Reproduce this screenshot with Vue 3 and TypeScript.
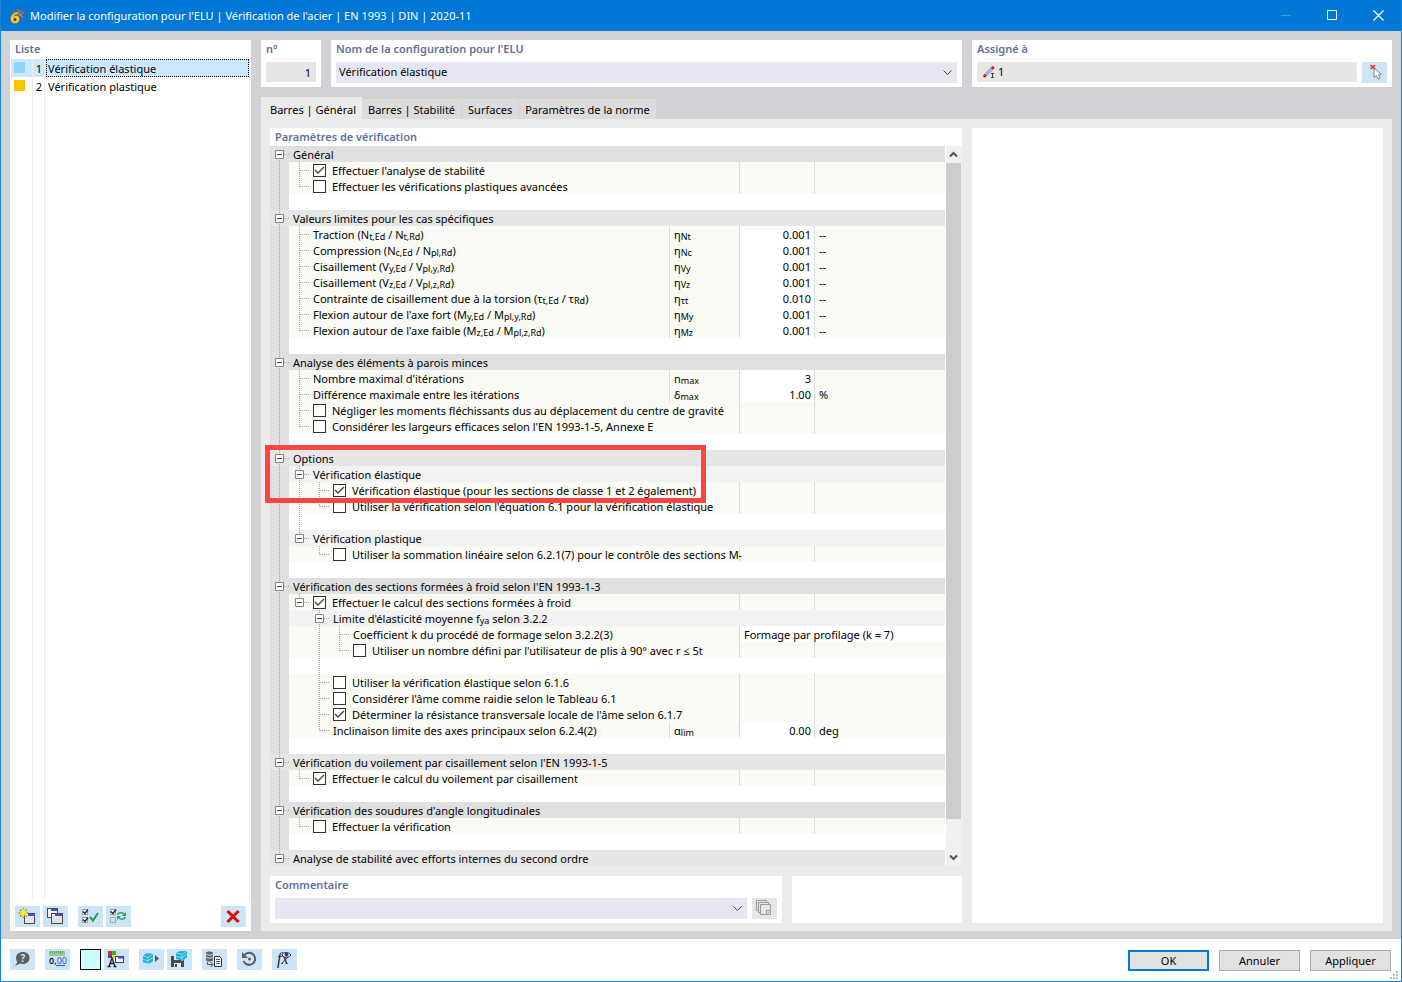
<script setup lang="ts">
import { ref } from 'vue'

type Guide = 'v' | 't' | 'l' | 'first' | 'mid' | 'last' | 'none'
interface Row {
  kind: 'dark' | 'light' | 'sub' | 'item' | 'blank'
  guides: Guide[]
  text?: string
  checked?: boolean
  symbol?: string
  value?: string
  unit?: string
  choice?: string
}
interface Part { text: string; sub: boolean }

// Subscripts are written between braces: "N{t,Ed}"
function parts(source: string): Part[] {
  return source
    .split(/(\{[^}]*\})/)
    .filter((s) => s.length > 0)
    .map((s) => (s[0] === '{' ? { text: s.slice(1, -1), sub: true } : { text: s, sub: false }))
}

const codes: Record<string, Guide> = { '|': 'v', '+': 't', L: 'l', F: 'first', B: 'mid', E: 'last', '.': 'none' }
const g = (s: string): Guide[] => s.split('').map((c) => codes[c])
const head = (kind: 'dark' | 'light', text: string, guide = 'B'): Row => ({ kind, guides: g(guide), text })
const sub = (guide: string, text: string): Row => ({ kind: 'sub', guides: g(guide), text })
const check = (guide: string, text: string, checked = false): Row => ({ kind: 'item', guides: g(guide), text, checked })
const param = (guide: string, text: string, symbol: string, value: string, unit: string): Row => ({
  kind: 'item', guides: g(guide), text, symbol, value, unit,
})
const blank = (guide = '|'): Row => ({ kind: 'blank', guides: g(guide) })

const rows = ref<Row[]>([
  head('dark', 'Général', 'F'),
  check('|+', "Effectuer l'analyse de stabilité", true),
  check('|L', 'Effectuer les vérifications plastiques avancées'),
  blank(),
  head('light', 'Valeurs limites pour les cas spécifiques'),
  param('|+', 'Traction (N{t,Ed} / N{t,Rd})', 'η{Nt}', '0.001', '--'),
  param('|+', 'Compression (N{c,Ed} / N{pl,Rd})', 'η{Nc}', '0.001', '--'),
  param('|+', 'Cisaillement (V{y,Ed} / V{pl,y,Rd})', 'η{Vy}', '0.001', '--'),
  param('|+', 'Cisaillement (V{z,Ed} / V{pl,z,Rd})', 'η{Vz}', '0.001', '--'),
  param('|+', 'Contrainte de cisaillement due à la torsion (τ{t,Ed} / τ{Rd})', 'η{τt}', '0.010', '--'),
  param('|+', "Flexion autour de l'axe fort (M{y,Ed} / M{pl,y,Rd})", 'η{My}', '0.001', '--'),
  param('|L', "Flexion autour de l'axe faible (M{z,Ed} / M{pl,z,Rd})", 'η{Mz}', '0.001', '--'),
  blank(),
  head('dark', 'Analyse des éléments à parois minces'),
  param('|+', "Nombre maximal d'itérations", 'n{max}', '3', ''),
  param('|+', 'Différence maximale entre les itérations', 'δ{max}', '1.00', '%'),
  check('|+', 'Négliger les moments fléchissants dus au déplacement du centre de gravité'),
  check('|L', "Considérer les largeurs efficaces selon l'EN 1993-1-5, Annexe E"),
  blank(),
  head('light', 'Options'),
  sub('|B', 'Vérification élastique'),
  check('||+', 'Vérification élastique (pour les sections de classe 1 et 2 également)', true),
  check('||L', "Utiliser la vérification selon l'équation 6.1 pour la vérification élastique"),
  blank('||'),
  sub('|E', 'Vérification plastique'),
  check('|.L', 'Utiliser la sommation linéaire selon 6.2.1(7) pour le contrôle des sections M-'),
  blank(),
  head('dark', "Vérification des sections formées à froid selon l'EN 1993-1-3"),
  check('|E', 'Effectuer le calcul des sections formées à froid', true),
  sub('|.B', "Limite d'élasticité moyenne f{ya} selon 3.2.2"),
  {
    kind: 'item', guides: g('|.|+'), text: 'Coefficient k du procédé de formage selon 3.2.2(3)',
    choice: 'Formage par profilage (k = 7)',
  },
  check('|.|L', "Utiliser un nombre défini par l'utilisateur de plis à 90° avec r ≤ 5t"),
  blank('|.|'),
  check('|.+', 'Utiliser la vérification élastique selon 6.1.6'),
  check('|.+', "Considérer l'âme comme raidie selon le Tableau 6.1"),
  check('|.+', "Déterminer la résistance transversale locale de l'âme selon 6.1.7", true),
  param('|.L', 'Inclinaison limite des axes principaux selon 6.2.4(2)', 'α{lim}', '0.00', 'deg'),
  blank(),
  head('light', "Vérification du voilement par cisaillement selon l'EN 1993-1-5"),
  check('|L', 'Effectuer le calcul du voilement par cisaillement', true),
  blank(),
  head('dark', "Vérification des soudures d'angle longitudinales"),
  check('|L', 'Effectuer la vérification'),
  blank(),
  head('light', 'Analyse de stabilité avec efforts internes du second ordre', 'E'),
])

const configurations = [
  { no: 1, name: 'Vérification élastique', tone: 'sky' },
  { no: 2, name: 'Vérification plastique', tone: 'gold' },
]
const selected = ref(1)
const tabs = ['Barres | Général', 'Barres | Stabilité', 'Surfaces', 'Paramètres de la norme']
const activeTab = ref(0)
const configName = ref('Vérification élastique')
const isBox = (k: Guide) => k === 'first' || k === 'mid' || k === 'last'
</script>

<template>
  <div class="window">
    <header class="titlebar">
      <svg class="app-icon" width="16" height="16" viewBox="0 0 16 16">
        <path d="M2 4 9 0l7 3v5l-3 5-4-6z" fill="#4d6284" />
        <path d="M4 3l10 6M8 1l6 9M12 2L7 6M15 4l-5 4" stroke="#8fa1bd" stroke-width=".7" fill="none" />
        <path d="M9.500 4C5 3.500 1.500 7 1.500 11c0 3 2 4.500 4.500 4.500s4.500-1.500 4.500-4.500S8.500 7.500 7 7.500c-1 0-2 .3-2.500 1C5 7 6.500 6 9 6.200z" fill="#f7cf3a" stroke="#8f6d12" stroke-width=".6" />
        <ellipse cx="6" cy="11.500" rx="1.500" ry="1.800" fill="#5b4a20" />
      </svg>
      <h1>Modifier la configuration pour l'ELU | Vérification de l'acier | EN 1993 | DIN | 2020-11</h1>
      <button class="caption" aria-label="Réduire" disabled>
        <svg width="11" height="11" viewBox="0 0 11 11"><path d="M0 5.500h10" stroke="#3f97e2" /></svg>
      </button>
      <button class="caption" aria-label="Agrandir">
        <svg width="11" height="11" viewBox="0 0 11 11"><path d="M.5.5h9v9h-9z" stroke="#fff" fill="none" /></svg>
      </button>
      <button class="caption" aria-label="Fermer">
        <svg width="11" height="11" viewBox="0 0 11 11"><path d="M.5.5l10 10M10.500.5l-10 10" stroke="#fff" stroke-width="1.200" /></svg>
      </button>
    </header>

    <main class="body">
      <aside class="card list-card">
        <h2>Liste</h2>
        <div class="list">
          <button
            v-for="c in configurations"
            :key="c.no"
            class="list-row"
            :class="{ selected: c.no === selected }"
            @click="selected = c.no"
          >
            <span class="c-tone"><i :class="c.tone"></i></span>
            <span class="c-no">{{ c.no }}</span>
            <span class="c-name">{{ c.name }}</span>
          </button>
          <div class="list-row filler"><span class="c-tone"></span><span class="c-no"></span><span class="c-name"></span></div>
        </div>
        <div class="list-tools">
          <div class="pair">
            <button class="tool" aria-label="Nouveau">
              <svg viewBox="0 0 25 21">
                <rect x="9.500" y="7.500" width="10" height="10" fill="#e6e6e6" stroke="#4a4a4a" />
                <path d="M10 8.500h9" stroke="#fff" /><path d="M13 9h7" stroke="#3d4fe0" stroke-width="2" />
                <path d="M8.500 2v10M3.500 7h10M5 3.500l7 7M12 3.500l-7 7" stroke="#8b8630" stroke-width="1.400" />
                <path d="M8.500 3v8M4.500 7h8M6 4.500l5 5M11 4.500l-5 5" stroke="#f8f220" stroke-width="1.400" />
              </svg>
            </button>
            <button class="tool" aria-label="Copier">
              <svg viewBox="0 0 25 21">
                <rect x="4.500" y="2.500" width="10" height="9" fill="#f4f4f4" stroke="#4a4a4a" />
                <path d="M8 4h6" stroke="#3d4fe0" stroke-width="2" />
                <rect x="8.500" y="7.500" width="11" height="10" fill="#e2e2e2" stroke="#4a4a4a" />
                <path d="M9 9h4" stroke="#fff" stroke-width="2" /><path d="M12 9h7" stroke="#3d4fe0" stroke-width="2" />
              </svg>
            </button>
          </div>
          <div class="pair">
            <button class="tool" aria-label="Tout sélectionner">
              <svg viewBox="0 0 25 21" fill="none">
                <path d="M4.500 3.500h5v5h-5zM4.500 11.500h5v5h-5z" stroke="#999" fill="#fff" />
                <path d="M5 5.500l2 2 3-4M5 13.500l2 2 3-4" stroke="#222" stroke-width="1.300" />
                <path d="M12 11l3 3.500 5-7.500" stroke="#1d9e4b" stroke-width="2" />
              </svg>
            </button>
            <button class="tool" aria-label="Inverser la sélection">
              <svg viewBox="0 0 25 21" fill="none">
                <path d="M4.500 3.500h5v5h-5z" stroke="#999" fill="#fff" /><path d="M4.500 11.500h5v5h-5z" stroke="#a0a8ae" />
                <path d="M5 5.500l2 2 3-4" stroke="#222" stroke-width="1.300" />
                <path d="M11.500 8.500c2-2.500 5-2 6.500-.5M19.500 11c-2 3-5 2.500-6.500 1" stroke="#2ca35a" stroke-width="1.500" />
                <path d="M20 6v4h-4zM11 14v-4h4z" fill="#2ca35a" />
              </svg>
            </button>
          </div>
          <button class="tool end" aria-label="Supprimer">
            <svg viewBox="0 0 25 21"><path d="M7.500 6l9 9M16.500 6l-9 9" stroke="#f00505" stroke-width="3" stroke-linecap="square" /></svg>
          </button>
        </div>
      </aside>

      <section class="content">
        <div class="top">
          <div class="card no-card">
            <label for="no">n°</label>
            <input id="no" class="field grey right" value="1" readonly />
          </div>
          <div class="card name-card">
            <label for="name">Nom de la configuration pour l'ELU</label>
            <div class="combo">
              <select id="name" v-model="configName" class="field">
                <option>Vérification élastique</option>
                <option>Vérification plastique</option>
              </select>
              <svg class="chevron" width="9" height="6" viewBox="0 0 9 6"><path d="M.5.5l4 4 4-4" fill="none" stroke="#444" /></svg>
            </div>
          </div>
          <div class="card assign-card">
            <label for="assigned">Assigné à</label>
            <div class="line">
              <div class="field grey assigned">
                <svg width="12" height="12" viewBox="0 0 12 12">
                  <path d="M2 9.500L9 2.500" stroke="#a9bddb" stroke-width="3.500" /><path d="M1.500 8.500L8 2M3 10l7-7" stroke="#8796ae" stroke-width=".6" />
                  <circle cx="1.800" cy="9.800" r="1.600" fill="#e01010" /><circle cx="9.800" cy="1.800" r="1.600" fill="#e01010" />
                  <path d="M8 7.500h3M8 11.500h3M9.500 7.500v4" stroke="#444" />
                </svg>
                <input id="assigned" value="1" readonly />
              </div>
              <button class="tool" aria-label="Sélectionner dans le graphique">
                <svg viewBox="0 0 25 21">
                  <path d="M12 6v9.500l2.300-2 1.800 3.500 2-1-1.700-3.200 3-.3z" fill="#fff" stroke="#888" />
                  <path d="M8.500 3l4.500 4M13 3L8.500 7" stroke="#e3262c" stroke-width="1.500" />
                </svg>
              </button>
            </div>
          </div>
        </div>

        <div class="tabs" role="tablist">
          <button v-for="(t, i) in tabs" :key="t" role="tab" :aria-selected="i === activeTab" class="tab" :class="{ active: i === activeTab }" @click="activeTab = i">{{ t }}</button>
        </div>

        <div class="pane">
          <div class="pane-main">
            <div class="card params">
              <h2>Paramètres de vérification</h2>
              <div class="tree-wrap">
                <table class="tree" aria-label="Paramètres de vérification">
                  <colgroup><col /><col class="w-symbol" /><col class="w-value" /><col class="w-unit" /></colgroup>
                  <tbody>
                    <tr v-for="(row, i) in rows" :key="i" :class="row.kind">
                      <td class="c-label" :colspan="row.symbol ? 1 : row.kind === 'item' ? 2 : 4">
                        <div class="label-cell">
                          <svg
                            v-for="(k, d) in row.guides"
                            :key="d"
                            :class="d === 0 ? 'gutter' : 'guide'"
                            :viewBox="d === 0 ? '1 0 19 16' : '0 0 20 16'"
                            height="16"
                          >
                            <g fill="none" stroke="#a6a6a6" stroke-dasharray="1 1">
                              <path v-if="k === 'v' || k === 't' || k === 'mid'" d="M10.500 0v16" />
                              <path v-if="k === 'l' || k === 'last'" d="M10.500 0v9" />
                              <path v-if="k === 'first'" d="M10.500 8v8" />
                              <path v-if="k === 't' || k === 'l'" d="M11 8.500h9" />
                              <path v-if="isBox(k)" d="M15 8.500h5" />
                            </g>
                            <g v-if="isBox(k)" fill="#fff" stroke="#858585">
                              <path d="M6.500 4.500h8v8h-8z" /><path d="M8 8.500h5" stroke="#444" />
                            </g>
                          </svg>
                          <label class="caption-text">
                            <input v-if="row.checked !== undefined" v-model="row.checked" type="checkbox" />
                            <span v-if="row.text"><template v-for="(p, n) in parts(row.text)" :key="n"><sub v-if="p.sub">{{ p.text }}</sub><template v-else>{{ p.text }}</template></template></span>
                          </label>
                        </div>
                      </td>
                      <td v-if="row.symbol" class="c-symbol">
                        <div class="cell"><template v-for="(p, n) in parts(row.symbol)" :key="n"><sub v-if="p.sub">{{ p.text }}</sub><template v-else>{{ p.text }}</template></template></div>
                      </td>
                      <td v-if="row.choice" class="c-value edit" colspan="2">
                        <select class="choice" :aria-label="row.text"><option>{{ row.choice }}</option></select>
                      </td>
                      <template v-else-if="row.kind === 'item'">
                        <td class="c-value" :class="{ edit: row.value }">
                          <input v-if="row.value" v-model="row.value" class="number" :aria-label="row.text" />
                        </td>
                        <td class="c-unit"><div class="cell">{{ row.unit }}</div></td>
                      </template>
                    </tr>
                  </tbody>
                </table>
                <div class="scrollbar">
                  <button aria-label="Défiler vers le haut"><svg width="9" height="7" viewBox="0 0 9 7"><path d="M1 5.500l3.500-3.500L8 5.500" fill="none" stroke="#505050" stroke-width="2" /></svg></button>
                  <div class="track"><div class="thumb"></div></div>
                  <button aria-label="Défiler vers le bas"><svg width="9" height="7" viewBox="0 0 9 7"><path d="M1 1.500L4.500 5 8 1.500" fill="none" stroke="#505050" stroke-width="2" /></svg></button>
                </div>
                <div class="highlight"></div>
              </div>
            </div>

            <div class="comment-row">
              <div class="card comment">
                <label for="comment">Commentaire</label>
                <div class="line">
                  <div class="combo">
                    <input id="comment" class="field" />
                    <svg class="chevron" width="9" height="6" viewBox="0 0 9 6"><path d="M.5.5l4 4 4-4" fill="none" stroke="#444" /></svg>
                  </div>
                  <button class="tool plain" aria-label="Commentaires enregistrés">
                    <svg viewBox="0 0 25 21" fill="#e6e6e6" stroke="#999">
                      <path d="M4.500 2.500h10v10h-10z" /><path d="M6.500 4.500h10v10h-10z" /><path d="M8.500 6.500h10v10h-10z" />
                      <path d="M14.500 12.500h4v4h-4zM15.500 15.500l2-2" />
                    </svg>
                  </button>
                </div>
              </div>
              <div class="card blank-card"></div>
            </div>
          </div>
          <div class="card preview"></div>
        </div>
      </section>
    </main>

    <footer class="footer">
      <button class="tool" aria-label="Aide">
        <svg viewBox="0 0 25 21">
          <path d="M13 3c4 0 6.500 2.500 6.500 6s-3 6-6.500 6c-1 0-2-.2-3-.5L5 17l2.500-4C6.500 12 6 10.500 6 9c0-3.500 3-6 7-6z" fill="#5f5f5f" />
          <text x="13" y="13" text-anchor="middle" font-size="10" font-weight="700" fill="#cce4f7">?</text>
        </svg>
      </button>
      <button class="tool" aria-label="Unités et décimales">
        <svg viewBox="0 0 25 21">
          <path d="M4 2h16v5H4z" fill="#8ed08c" /><path d="M5.500 2v2M7.500 2v2M9.500 2v3M11.500 2v2M13.500 2v2M15.500 2v3M17.500 2v2" stroke="#58a458" />
          <text x="4" y="15" font-size="9" font-weight="600" fill="#111">0,<tspan fill="#2a5fd0" font-weight="400">00</tspan></text>
          <path d="M11 16.500h9" stroke="#2a5fd0" />
        </svg>
      </button>
      <button class="swatch" aria-label="Couleur"></button>
      <button class="tool near" aria-label="Couleurs d'affichage">
        <svg viewBox="0 0 25 21">
          <path d="M4 2h4v4H4z" fill="#e8251f" /><path d="M8 2h4v4H8z" fill="#38b030" /><path d="M4 6h4v3H4z" fill="#2a48e0" /><path d="M8 6h3v3H8z" fill="#f3d713" />
          <path d="M5 17.500L8 9l3 8.500M6 14.500h4M3.500 17.500h3M9.500 17.500h3" fill="none" stroke="#222" stroke-width="1.300" />
          <rect x="11.500" y="7.500" width="8" height="6" fill="#f4f4f4" stroke="#444" /><path d="M14 8.500h5" stroke="#3d4fe0" stroke-width="2" />
        </svg>
      </button>
      <button class="tool" aria-label="Afficher l'objet">
        <svg viewBox="0 0 25 21">
          <path d="M4 7l4-3 6 1v7l-4 3-6-2z" fill="#1fb0d8" /><path d="M4 7l5 1.500L14 5M9 8.500V15M4 10.500l5 1.200 5-3.200" stroke="#a5e5f4" stroke-width=".8" fill="none" />
          <path d="M16 6l4 3.500-4 3.500z" fill="#555" />
        </svg>
      </button>
      <button class="tool near" aria-label="Enregistrer l'objet">
        <svg viewBox="0 0 25 21">
          <path d="M4 7h11l2 2v9H4z" fill="#4b4b4b" /><path d="M7 7h6v4H7zM7 14h7v4H7z" fill="#e4eef6" /><path d="M8 15h2v3H8z" fill="#4b4b4b" />
          <path d="M9 4l4-2 7 0v6l-4 4-7-2z" fill="#1fb0d8" /><path d="M9 4l6 1.500L20 2M15 5.500V12M9 7.500l6 1.200 5-3.500" stroke="#a5e5f4" stroke-width=".8" fill="none" />
        </svg>
      </button>
      <button class="tool" aria-label="Copier depuis la base de données">
        <svg viewBox="0 0 25 21">
          <path d="M4 4c0-2 7-2 7 0v7c0 2-7 2-7 0z" fill="#666" /><path d="M4 5c1 1.500 6 1.500 7 0M4 8c1 1.500 6 1.500 7 0" fill="none" stroke="#cce4f7" />
          <path d="M5.500 13v2.500h5M8.500 13l2.500 2.500L8.500 18" fill="none" stroke="#555" />
          <path d="M12.500 7.500h5l2 2v8h-7z" fill="#fff" stroke="#333" /><path d="M14 10.500h4M14 12.500h4M14 14.500h4" stroke="#555" />
        </svg>
      </button>
      <button class="tool" aria-label="Rétablir">
        <svg viewBox="0 0 25 21" fill="none">
          <path d="M7.500 6A6 6 0 1 1 6.500 12" stroke="#5c5c5c" stroke-width="2" /><path d="M5 3v6h6z" fill="#5c5c5c" /><circle cx="12.500" cy="10" r="1.500" fill="#5c5c5c" />
        </svg>
      </button>
      <button class="tool" aria-label="Formules">
        <svg viewBox="0 0 25 21">
          <text x="5" y="15" font-size="16" font-style="italic" font-family="Liberation Serif, serif" fill="#222">fx</text>
          <path d="M10 6c2-3.500 6-3.500 9 0-3 3-7 3-9 0z" fill="#fff" stroke="#2b2b60" /><circle cx="14.500" cy="5.500" r="2" fill="#3a3a80" />
        </svg>
      </button>
      <div class="actions">
        <button class="action primary">OK</button>
        <button class="action">Annuler</button>
        <button class="action">Appliquer</button>
      </div>
      <svg class="grip" width="8" height="8" viewBox="0 0 8 8" fill="#bdbdbd"><path d="M6 0h2v2H6zM3 3h2v2H3zM6 3h2v2H6zM0 6h2v2H0zM3 6h2v2H3zM6 6h2v2H6z" /></svg>
    </footer>
  </div>
</template>

<style>
body { margin: 0; }
</style>

<style scoped>
* { box-sizing: border-box; }
.window {
  min-height: 100vh; display: flex; flex-direction: column;
  border: 1px solid #1883d7; border-top: 0; background: #fff; color: #000;
  font: 11px/16px "Noto Sans", "Open Sans", sans-serif;
}
button, input, select { font: inherit; color: inherit; margin: 0; padding: 0; border: 0; border-radius: 0; }
input, select { min-width: 0; outline: 0; }
h1, h2 { margin: 0; }

.titlebar { height: 31px; display: flex; align-items: center; background: #0078d7; color: #fff; padding-left: 8px; }
.titlebar h1 { flex: 1; margin-left: 5px; font-size: 11px; font-weight: 400; }
.caption { width: 46px; height: 31px; display: grid; place-items: center; background: none; }

.body { flex: 1; display: flex; gap: 10px; padding: 9px 9px 8px; background: #d1d1d6; }
.card { background: #fff; }
h2, .card > label { display: block; height: 18px; padding-left: 5px; font-size: 11px; font-weight: 600; line-height: 18px; color: #5f7099; }

.list-card { width: 241px; flex: none; display: flex; flex-direction: column; padding-bottom: 4px; }
.list-card h2 { height: 19px; }
.list { flex: 1; display: flex; flex-direction: column; margin: 0 1px; border-right: 1px solid #ececec; }
.list-row { display: flex; height: 18px; background: #fff; text-align: left; line-height: 18px; }
.list-row.selected { background: #cce8ff; }
.c-tone { width: 22px; padding: 3px; border-right: 1px solid #ececec; }
.c-tone i { display: block; width: 11px; height: 11px; }
.sky { background: #8fd6f5; }
.gold { background: #f7c600; }
.c-no { width: 12px; padding-right: 2px; border-right: 1px solid #ececec; text-align: right; line-height: 20px; }
.c-name { flex: 1; margin-left: 1px; padding-left: 1px; border: 1px solid transparent; line-height: 18px; }
.selected .c-name { border: 1px dotted #000; }
.filler { flex: 1; }
.list-tools { display: flex; gap: 10px; padding: 5px 5px 0; }
.pair { display: flex; gap: 3px; }
.tool { width: 25px; height: 21px; flex: none; background: #cce4f7; }
.tool svg { display: block; width: 25px; height: 21px; }
.tool.plain { background: #e6e6e6; }
.end { margin-left: auto; }

.content { flex: 1; min-width: 0; display: flex; flex-direction: column; }
.top { display: flex; gap: 10px; height: 47px; }
.top .card { padding: 0 5px; }
.top .card > label { height: 22px; padding-left: 0; }
.no-card { width: 60px; }
.name-card { flex: 621; }
.assign-card { flex: 410; }
.field { display: block; width: 100%; height: 21px; padding: 0 3px 1px; background: #e6e6f2; appearance: none; }
.field.grey { height: 20px; padding-bottom: 0; background: #e6e6e6; }
.field.right { text-align: right; padding-right: 5px; }
.combo { flex: 1; position: relative; }
.chevron { position: absolute; right: 5px; top: 8px; pointer-events: none; }
.line { display: flex; gap: 5px; }
.field.assigned { display: flex; align-items: center; gap: 3px; padding-left: 6px; }
.assigned input { flex: 1; background: none; }

.tabs { display: flex; align-items: flex-end; height: 22px; margin-top: 10px; }
.tab { height: 20px; padding: 2px 6px 0; background: #dcdcdc; border-right: 1px solid #d3d3d3; }
.tab.active { height: 22px; padding: 4px 6px 0 9px; background: #ebebeb; border: 0; }

.pane { flex: 1; display: flex; gap: 10px; padding: 9px 9px 8px; background: #ebebeb; }
.pane-main { flex: 692; min-width: 0; display: flex; flex-direction: column; gap: 10px; }
.preview { flex: 411; }
.params { flex: 1; }
.tree-wrap { position: relative; display: flex; }
.tree { flex: 1; width: 100%; table-layout: fixed; border-collapse: separate; border-spacing: 0; }
.w-symbol { width: 70px; }
.w-value { width: 75px; }
.w-unit { width: 131px; }
.tree tr { height: 16px; }
.tree td { height: 16px; padding: 0; line-height: 16px; white-space: nowrap; }
.dark td { background: #e0e0e0; }
.light td { background: #e6e6e6; }
.sub td { background: #f2f2f2; }
.item td { background: #fafaf5; }
.label-cell { display: flex; height: 16px; }
.label-cell svg { flex: none; display: block; width: 20px; }
.label-cell .gutter { width: 19px; background: #e0e0e0; }
.light .gutter { background: #e6e6e6; }
.caption-text { display: flex; padding-left: 4px; line-height: 17px; }
.caption-text input {
  appearance: none; width: 13px; height: 13px; flex: none; margin: 2px 6px 0 0;
  border: 1px solid #333; background: #fff;
}
.caption-text input:checked {
  background: #fff url("data:image/svg+xml,%3Csvg xmlns='http://www.w3.org/2000/svg' viewBox='0 0 11 11'%3E%3Cpath d='M1 5l3 3 6-6' fill='none' stroke='%23444' stroke-width='1.400'/%3E%3C/svg%3E");
}
.cell { height: 16px; line-height: 17px; }
sub { font-size: 9px; line-height: 0; vertical-align: -1px; }
.tree .c-symbol, .tree .c-value, .tree .c-unit { border-left: 1px solid #dedede; }
.tree .c-symbol { padding-left: 4px; }
.tree .c-unit { padding-left: 4px; }
.tree .edit { background: #fff; }
.number { display: block; width: 100%; height: 16px; padding: 1px 3px 0 0; line-height: 15px; text-align: right; background: none; }
.choice { display: block; width: 100%; height: 16px; padding: 1px 0 0 4px; line-height: 15px; appearance: none; background: none; }

.scrollbar { width: 17px; flex: none; display: flex; flex-direction: column; background: #f0f0f0; border-left: 1px solid #fff; }
.scrollbar button { width: 15px; height: 17px; display: grid; place-items: center; background: none; }
.track { flex: 1; display: flex; padding-bottom: 30px; }
.thumb { width: 15px; background: #cdcdcd; }
.highlight {
  position: absolute; left: -5px; top: 299px; width: 441px; height: 58px;
  border: 5px solid #fd4444; pointer-events: none;
}

.comment-row { display: flex; gap: 10px; height: 47px; }
.comment { flex: 502; padding: 0 5px; }
.comment > label { height: 22px; padding-left: 0; }
.blank-card { flex: 170; }

.footer { position: relative; display: flex; height: 42px; padding: 10px 10px 0 9px; gap: 10px; }
.swatch { width: 21px; height: 21px; background: #ccffff; border: 1px solid #000; }
.near { margin-left: -7px; }
.actions { display: flex; gap: 10px; margin-left: auto; padding-top: 1px; }
.action { width: 81px; height: 21px; background: #e1e1e1; border: 1px solid #adadad; }
.action.primary { border: 2px solid #0078d7; }
.grip { position: absolute; right: 3px; bottom: 2px; }
</style>
